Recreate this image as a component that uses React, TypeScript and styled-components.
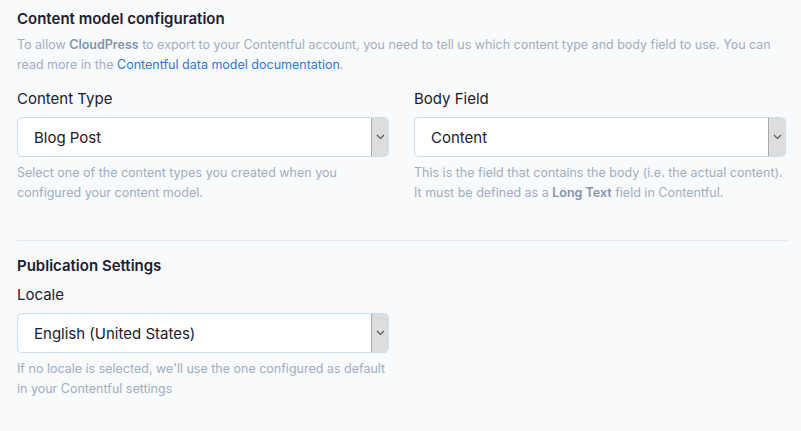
import styled, { createGlobalStyle } from 'styled-components';

const GlobalStyle = createGlobalStyle`
  html, body {
    margin: 0;
    padding: 0;
    background: #f8fafc;
  }
  body {
    font-family: Inter, "Noto Sans", sans-serif;
    color: #1a202c;
  }
`;

const Page = styled.div`
  width: 801px;
  height: 431px;
  box-sizing: border-box;
  padding: 9px 14px 0 17px;
  background: #f8fafc;
`;

const Section = styled.section`
  display: flex;
  flex-direction: column;
`;

const Title = styled.h2`
  margin: 0;
  font-size: 15px;
  font-weight: 600;
  line-height: 20px;
  color: #1a202c;
`;

const Intro = styled.p`
  margin: 6px 0 0;
  font-size: 12.5px;
  line-height: 20px;
  color: #a0aec0;
  b {
    color: #8494ab;
    font-weight: 600;
  }
  a {
    color: #2b7bd6;
    text-decoration: none;
  }
`;

const Columns = styled.div`
  display: grid;
  grid-template-columns: 372px 373px;
  column-gap: 25px;
  margin-top: 14px;
`;

const Field = styled.div`
  display: flex;
  flex-direction: column;
  width: 372px;
`;

const Label = styled.label`
  font-size: 15px;
  line-height: 20px;
  color: #1a202c;
`;

const Select = styled.div`
  margin-top: 8px;
  height: 40px;
  box-sizing: border-box;
  display: flex;
  align-items: stretch;
  background: #fff;
  border: 1px solid #cfdcec;
  border-radius: 5px;
  overflow: hidden;
`;

const Value = styled.span`
  flex: 1;
  display: flex;
  align-items: center;
  padding-left: 16px;
  font-size: 15px;
  color: #1a202c;
`;

const Arrow = styled.span`
  width: 16px;
  display: flex;
  align-items: center;
  justify-content: center;
  background: #dddddd;
  border-left: 1px solid #a8a8a8;
`;

const Help = styled.p`
  margin: 6px 0 0;
  font-size: 12.5px;
  line-height: 20px;
  color: #a0aec0;
  b {
    color: #8494ab;
    font-weight: 600;
  }
`;

const Divider = styled.hr`
  margin: 37px 0 0;
  border: none;
  border-top: 1px solid #e2e8f4;
  width: 770px;
`;

const SubTitle = styled(Title)`
  margin-top: 15px;
`;

const LocaleField = styled(Field)`
  margin-top: 9px;
`;

const Chevron = () => (
  <svg width="9" height="6" viewBox="0 0 9 6" fill="none">
    <path d="M1 1l3.5 3.5L8 1" stroke="#555" strokeWidth="1.1" />
  </svg>
);

const SelectBox = ({ value }: { value: string }) => (
  <Select>
    <Value>{value}</Value>
    <Arrow>
      <Chevron />
    </Arrow>
  </Select>
);

const App = () => {
  return (
    <Page>
      <GlobalStyle />
      <Section>
        <Title>Content model configuration</Title>
        <Intro>
          To allow <b>CloudPress</b> to export to your Contentful account, you need to tell us which
          content type and body field to use. You can read more in the{' '}
          <a href="#">Contentful data model documentation</a>.
        </Intro>
        <Columns>
          <Field>
            <Label>Content Type</Label>
            <SelectBox value="Blog Post" />
            <Help>
              Select one of the content types you created when you configured your content model.
            </Help>
          </Field>
          <Field>
            <Label>Body Field</Label>
            <SelectBox value="Content" />
            <Help>
              This is the field that contains the body (i.e. the actual content). It must be defined
              as a <b>Long Text</b> field in Contentful.
            </Help>
          </Field>
        </Columns>
      </Section>
      <Divider />
      <Section>
        <SubTitle>Publication Settings</SubTitle>
        <LocaleField>
          <Label>Locale</Label>
          <SelectBox value="English (United States)" />
          <Help>
            If no locale is selected, we'll use the one configured as default in your Contentful
            settings
          </Help>
        </LocaleField>
      </Section>
    </Page>
  );
};

export default App;
